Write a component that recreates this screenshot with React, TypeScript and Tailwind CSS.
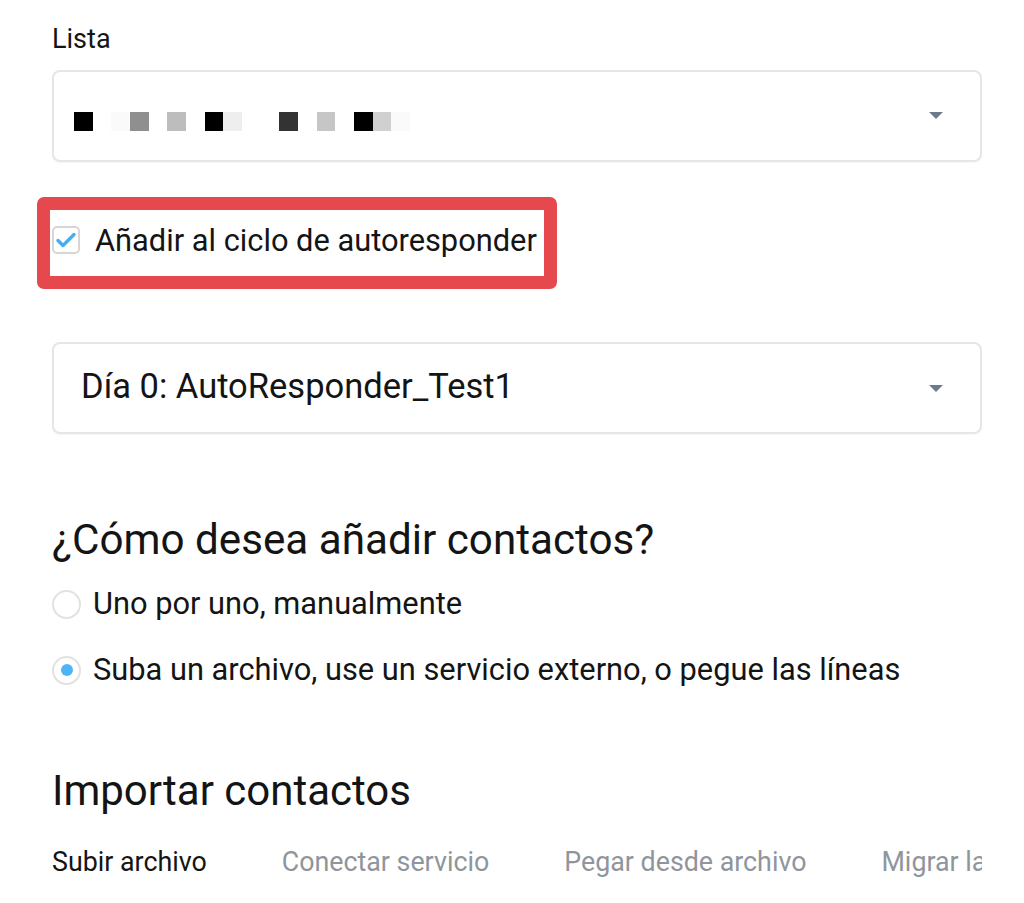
const cells = [
  "bg-[#000000]",
  "",
  "bg-[#fafafa]",
  "bg-[#8f8f8f]",
  "",
  "bg-[#bdbdbd]",
  "",
  "bg-[#000000]",
  "bg-[#eeeeee]",
  "",
  "",
  "bg-[#333333]",
  "",
  "bg-[#c6c6c6]",
  "",
  "bg-[#000000]",
  "bg-[#d0d0d0]",
  "bg-[#fafafa]",
];

const tabs = [
  { label: "Subir archivo", active: true },
  { label: "Conectar servicio", active: false },
  { label: "Pegar desde archivo", active: false },
  { label: "Migrar las listas", active: false },
];

const Caret = () => (
  <svg width="14" height="7" viewBox="0 0 14 7" className="shrink-0">
    <path d="M0 0 L14 0 L7 7 Z" fill="#6b7b8c" />
  </svg>
);

const Radio = ({ checked }: { checked?: boolean }) => (
  <span className="w-[29px] h-[29px] rounded-full border-2 border-[#e2e2e2] flex items-center justify-center shrink-0">
    {checked && <span className="w-[12px] h-[12px] rounded-full bg-[#4db5f5]" />}
  </span>
);

export default function App() {
  return (
    <div className="w-[1024px] h-[903px] overflow-hidden bg-white pl-[52px] pr-[42px] font-['Roboto',sans-serif] text-[#141414]">
      <div className="pt-[23px] text-[27px] leading-[32px]">Lista</div>

      {/* lista select */}
      <div className="mt-[15px] h-[92px] rounded-[8px] border-2 border-[#e6e6e6] shadow-[0_1px_2px_rgba(0,0,0,0.04)] flex items-center justify-between pl-[20px] pr-[37px]">
        <div className="flex mt-[10px]">
          {cells.map((c, i) => (
            <div key={i} className={`w-[18.67px] h-[19px] ${c}`} />
          ))}
        </div>
        <span className="-mt-[2px]">
          <Caret />
        </span>
      </div>

      {/* autoresponder checkbox with highlight */}
      <div className="relative mt-[61px] h-[36px] flex items-center">
        <span className="w-[28px] h-[28px] -mt-[3px] rounded-[5px] border-2 border-[#d6d6d6] flex items-center justify-center shrink-0">
          <svg width="24" height="24" viewBox="0 0 24 24">
            <path d="M4 12.5 L9 17.5 L20 6.5" fill="none" stroke="#46aef0" strokeWidth="3.4" strokeLinecap="round" strokeLinejoin="round" />
          </svg>
        </span>
        <span className="ml-[15px] text-[30.8px] leading-[36px] whitespace-nowrap">Añadir al ciclo de autoresponder</span>
        <div className="absolute -left-[15px] -top-[26px] w-[520px] h-[92px] border-[13px] border-[#e5484d] rounded-[7px] pointer-events-none" />
      </div>

      {/* autoresponder select */}
      <div className="mt-[83px] h-[92px] rounded-[8px] border-2 border-[#e6e6e6] shadow-[0_1px_2px_rgba(0,0,0,0.04)] flex items-center justify-between pl-[27px] pr-[37px]">
        <span className="text-[34.5px] leading-[40px] pb-[4px]">Día 0: AutoResponder_Test1</span>
        <Caret />
      </div>

      <h2 className="mt-[81px] text-[42.2px] leading-[50px] font-normal">¿Cómo desea añadir contactos?</h2>

      <div className="mt-[21px] h-[36px] flex items-center gap-[12px]">
        <Radio />
        <span className="text-[30.8px] leading-[36px]">Uno por uno, manualmente</span>
      </div>
      <div className="mt-[30px] h-[36px] flex items-center gap-[12px]">
        <Radio checked />
        <span className="text-[30.8px] leading-[36px] whitespace-nowrap">Suba un archivo, use un servicio externo, o pegue las líneas</span>
      </div>

      <h2 className="mt-[78px] text-[42px] leading-[50px] font-normal">Importar contactos</h2>

      <div className="mt-[30px] flex gap-[75px] overflow-hidden whitespace-nowrap text-[26.8px] leading-[32px]">
        {tabs.map((t) => (
          <span key={t.label} className={t.active ? "text-[#141414]" : "text-[#8f959c]"}>
            {t.label}
          </span>
        ))}
      </div>
    </div>
  );
}
